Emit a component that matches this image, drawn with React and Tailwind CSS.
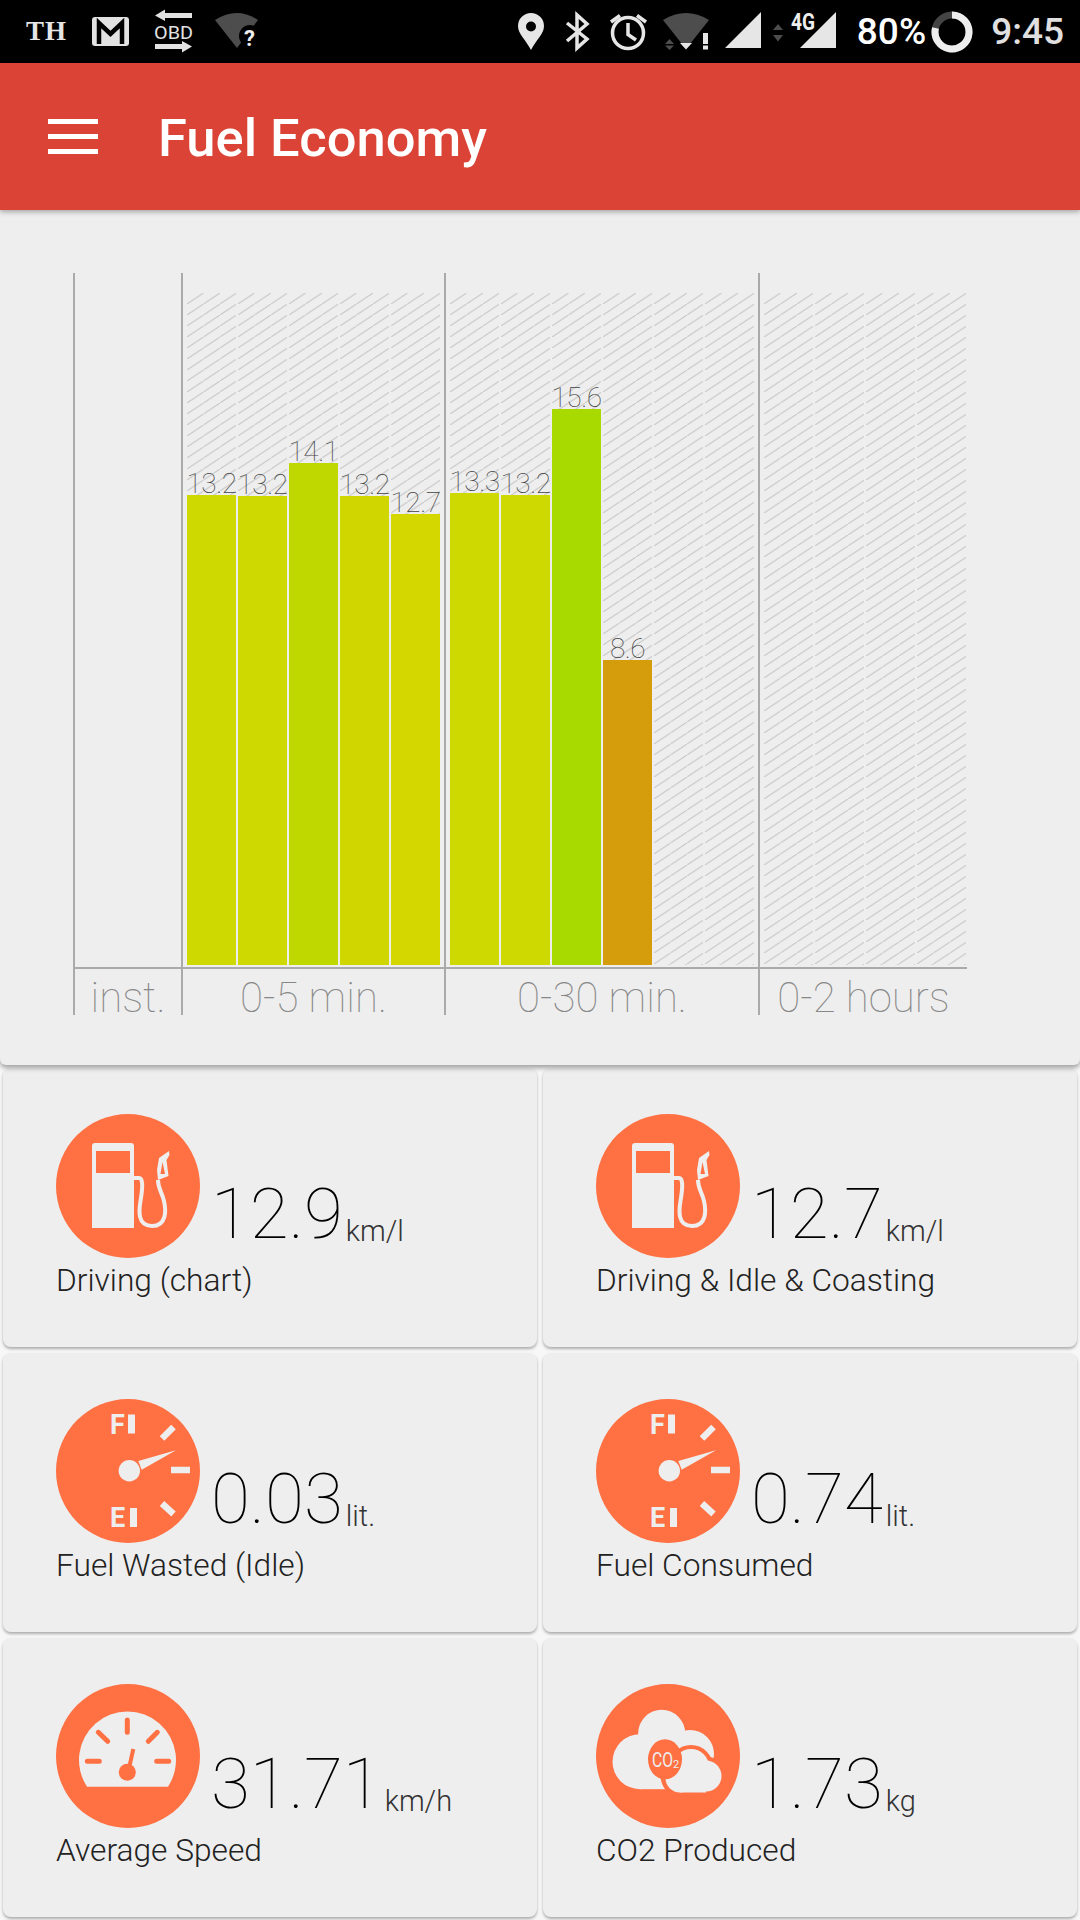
import React from 'react';

const ORANGE = '#ff7043';
const LIGHT = '#eeeeee';

/* status bar icons */
function LeftIcons() {
  return (
    <svg width="180" height="63" viewBox="85 0 180 63" className="shrink-0">
      <rect x="92" y="17" width="37" height="29" rx="3" fill="#e2e2e2" />
      <path d="M99 44V23L110.500 34L122 23V44" fill="none" stroke="#000" strokeWidth="4.500" />
      <path d="M155 15.500L165 9.500V13H192V18H165V21Z" fill="#e2e2e2" />
      <text x="154" y="38.500" fontSize="19" fill="#e2e2e2" fontFamily="Roboto" textLength="39" lengthAdjust="spacingAndGlyphs">OBD</text>
      <path d="M192 46.500L182 52.500V49H155V44H182V41Z" fill="#e2e2e2" />
      <path d="M215 20Q237 6 258 20L237 48Z" fill="#4d4d4d" />
      <circle cx="250" cy="36" r="11" fill="#000" />
      <text x="244" y="46" fontSize="22" fontWeight="700" fill="#eee" fontFamily="Roboto">?</text>
    </svg>
  );
}

function RightIcons() {
  return (
    <svg width="330" height="63" viewBox="510 0 330 63" className="shrink-0">
      {/* pin */}
      <path fillRule="evenodd" d="M531 50C526 40 518 34 518 26A13 13 0 0 1 544 26C544 34 536 40 531 50ZM531 21.500A5 5 0 1 0 531 31.500A5 5 0 1 0 531 21.500Z" fill="#e6e6e6" />
      {/* bluetooth */}
      <path d="M567 23L587 39L577 48V15L587 24L567 41" fill="none" stroke="#e6e6e6" strokeWidth="3.500" />
      {/* alarm */}
      <circle cx="628" cy="33" r="15.500" fill="none" stroke="#e6e6e6" strokeWidth="3.500" />
      <path d="M628 23V34.500L636 40M611 22L620 15.500M637 15.500L646 22" fill="none" stroke="#e6e6e6" strokeWidth="3.500" />
      {/* wifi */}
      <path d="M663 20Q686 6 709 20L686 49Z" fill="#4d4d4d" />
      <path d="M680 43H692L686 49.500Z" fill="#e6e6e6" />
      <rect x="703" y="33" width="5" height="11" fill="#e6e6e6" />
      <rect x="703" y="45.500" width="5" height="4" fill="#e6e6e6" />
      <path d="M665 44L669.500 39L674 44ZM665 45.500H674L669.500 50Z" fill="#4d4d4d" />
      {/* signal */}
      <path d="M725 48L761 12V48Z" fill="#e6e6e6" />
      <path d="M773 30L778 24L783 30ZM773 35H783L778 41.500Z" fill="#4d4d4d" />
      <path d="M800 48L836 12V48Z" fill="#e6e6e6" />
      <text x="791" y="30" fontSize="23" fontWeight="700" fill="#eee" fontFamily="Roboto" textLength="24" lengthAdjust="spacingAndGlyphs">4G</text>
    </svg>
  );
}

function BatteryRing() {
  return (
    <svg width="42" height="42" viewBox="0 0 42 42" className="shrink-0">
      <circle cx="21" cy="21" r="17" fill="none" stroke="#444" strokeWidth="7" />
      <path d="M21 4A17 17 0 1 1 4.500 17" fill="none" stroke="#eeeeee" strokeWidth="7" />
    </svg>
  );
}

function Hamburger() {
  return (
    <svg width="50" height="36" viewBox="0 0 50 36" className="shrink-0">
      <rect y="0" width="50" height="5" fill="#fff" />
      <rect y="15" width="50" height="5" fill="#fff" />
      <rect y="30" width="50" height="5" fill="#fff" />
    </svg>
  );
}

/* card icons, all on a 144 circle */
function Circle({ children }) {
  return (
    <svg width="144" height="144" viewBox="0 0 144 144" className="shrink-0">
      <circle cx="72" cy="72" r="72" fill={ORANGE} />
      {children}
    </svg>
  );
}

function PumpIcon() {
  return (
    <Circle>
      <path d="M36 32a3 3 0 0 1 3-3h36a3 3 0 0 1 3 3v82H36Z" fill={LIGHT} />
      <rect x="40" y="37" width="34" height="22" fill={ORANGE} />
      <path d="M78 64H83C88 64 86 78 84.500 87C83 96 81 112 96 112C111 112 110 96 108 87C106 78 102 75 102 66" fill="none" stroke={LIGHT} strokeWidth="4" />
      <path d="M101 56L103 44L113 37L113.500 41L110.500 46L112.500 62L102 66Z" fill={LIGHT} />
      <path d="M104.500 60L106.500 48L109 60Z" fill={ORANGE} />
    </Circle>
  );
}

function FuelIcon() {
  return (
    <Circle>
      <text x="54" y="34.500" fontSize="27" fontWeight="700" fontFamily="Roboto" fill={LIGHT}>F</text>
      <rect x="72" y="15.500" width="7" height="19" fill={LIGHT} />
      <text x="54" y="128" fontSize="27" fontWeight="700" fontFamily="Roboto" fill={LIGHT}>E</text>
      <rect x="74" y="109" width="7" height="19" fill={LIGHT} />
      <path d="M106 39.500L117.500 28M115 71H134M106 104.500L117.500 115" stroke={LIGHT} strokeWidth="6.500" fill="none" />
      <path d="M120 51.300L82.300 62L85.700 70.700Z" fill={LIGHT} />
      <circle cx="73.300" cy="71.700" r="10.700" fill={LIGHT} />
    </Circle>
  );
}

function SpeedIcon() {
  return (
    <Circle>
      <path d="M31 102.700A48.500 48.500 0 1 1 112 102.700Z" fill={LIGHT} />
      <path d="M71.300 36V48.300M42.300 48.300L51.700 57.300M101.300 48.300L92.300 57.300M31.300 77.300H43.300M100.700 77.300H112.700" stroke={ORANGE} strokeWidth="5" strokeLinecap="round" fill="none" />
      <path d="M77.300 65L73.300 83" stroke={ORANGE} strokeWidth="4" fill="none" />
      <circle cx="71.300" cy="88.300" r="8.500" fill={ORANGE} />
    </Circle>
  );
}

function CloudIcon() {
  return (
    <Circle>
      <g fill={LIGHT}>
        <circle cx="44" cy="77.700" r="27.500" />
        <circle cx="65.700" cy="49.300" r="23.500" />
        <circle cx="94" cy="70" r="24" />
        <rect x="44" y="60" width="40" height="45.200" />
      </g>
      <g fill={ORANGE} stroke={ORANGE} strokeWidth="8">
        <circle cx="95" cy="83" r="18" />
        <circle cx="110" cy="92" r="15.500" />
        <circle cx="84" cy="94" r="14.500" />
      </g>
      <g fill={LIGHT}>
        <circle cx="95" cy="83" r="18" />
        <circle cx="110" cy="92" r="15.500" />
        <circle cx="84" cy="94" r="14.500" />
        <rect x="84" y="85" width="26" height="23.500" />
      </g>
      <ellipse cx="69" cy="75.300" rx="17" ry="20" fill={ORANGE} />
      <path d="M66 92C67 100 70 105 75 109" fill="none" stroke={ORANGE} strokeWidth="3.500" />
      <text x="56" y="83" fontSize="21" fill={LIGHT} fontFamily="Roboto" textLength="21" lengthAdjust="spacingAndGlyphs">CO</text>
      <text x="77" y="84" fontSize="11" fill={LIGHT} fontFamily="Roboto">2</text>
    </Circle>
  );
}

/* chart */
function Hatch({ id }) {
  return (
    <svg className="absolute inset-0 w-full h-full">
      <defs>
        <pattern id={id} width="16.500" height="11" patternUnits="userSpaceOnUse">
          <path d="M-1.650 12.100L18.150 -1.100" stroke="#cccccc" strokeWidth="1.300" />
        </pattern>
      </defs>
      <rect width="100%" height="100%" fill={`url(#${id})`} />
    </svg>
  );
}

function Slot({ id, bar }) {
  return (
    <div className="relative w-[49px] h-full flex flex-col justify-end items-center">
      <Hatch id={id} />
      {bar && (
        <>
          <span className="relative text-[28px] font-thin leading-[22px] text-[#444] whitespace-nowrap tracking-[-0.5px]">{bar.value}</span>
          <div className="relative w-full" style={{ height: bar.height, backgroundColor: bar.color }} />
        </>
      )}
    </div>
  );
}

const segments = [
  { key: 'inst', width: 108, label: 'inst.', slots: [] },
  {
    key: 'five',
    width: 263,
    label: '0-5 min.',
    slots: [
      { value: '13.2', height: 470, color: '#cdd900' },
      { value: '13.2', height: 469, color: '#cdd900' },
      { value: '14.1', height: 502, color: '#bfd900' },
      { value: '13.2', height: 469, color: '#d0d700' },
      { value: '12.7', height: 451, color: '#d4d800' },
    ],
  },
  {
    key: 'thirty',
    width: 314,
    label: '0-30 min.',
    slots: [
      { value: '13.3', height: 472, color: '#cdd900' },
      { value: '13.2', height: 470, color: '#cdd900' },
      { value: '15.6', height: 556, color: '#a8da00' },
      { value: '8.6', height: 305, color: '#d59c0b' },
      null,
      null,
    ],
  },
  { key: 'hours', width: 209, label: '0-2 hours', slots: [null, null, null, null] },
];

function Chart() {
  return (
    <div className="relative h-[855px] bg-[#eeeeee] rounded-b-[6px] shadow-[0_3px_5px_rgba(0,0,0,0.35)] pt-[63px] pl-[73px] flex items-start">
      {segments.map((seg) => (
        <div key={seg.key} className="flex flex-col border-l-2 border-[#aaaaaa] shrink-0" style={{ width: seg.width }}>
          <div className="h-[696px] border-b-2 border-[#aaaaaa] pt-[20px] pb-[2px] pl-[4px] flex gap-[2px]">
            {seg.slots.map((bar, i) => (
              <Slot key={i} id={`hatch-${seg.key}-${i}`} bar={bar} />
            ))}
          </div>
          <div className="h-[46px] pt-[12px] flex justify-center items-center text-[42px] font-thin leading-none text-[#888] whitespace-nowrap">
            {seg.label}
          </div>
        </div>
      ))}
    </div>
  );
}

const cards = [
  { icon: <PumpIcon />, value: '12.9', unit: 'km/l', label: 'Driving (chart)' },
  { icon: <PumpIcon />, value: '12.7', unit: 'km/l', label: 'Driving & Idle & Coasting' },
  { icon: <FuelIcon />, value: '0.03', unit: 'lit.', label: 'Fuel Wasted (Idle)' },
  { icon: <FuelIcon />, value: '0.74', unit: 'lit.', label: 'Fuel Consumed' },
  { icon: <SpeedIcon />, value: '31.71', unit: 'km/h', label: 'Average Speed' },
  { icon: <CloudIcon />, value: '1.73', unit: 'kg', label: 'CO2 Produced' },
];

function MetricCard({ icon, value, unit, label }) {
  return (
    <div className="h-[279px] bg-[#eeeeee] rounded-[8px] shadow-[0_2px_3px_rgba(0,0,0,0.3)] pt-[46px] pl-[53px]">
      <div className="flex items-end">
        {icon}
        <div className="flex items-baseline ml-[11px] mb-[9px]">
          <span className="text-[71px] font-thin leading-none text-black">{value}</span>
          <span className="text-[29px] font-light leading-none text-[#333] ml-[3px] translate-y-[3px]">{unit}</span>
        </div>
      </div>
      <div className="mt-[3px] text-[31.700px] font-light leading-[40px] text-[#222]">{label}</div>
    </div>
  );
}

export default function App() {
  return (
    <div className="w-[1080px] h-[1920px] overflow-hidden bg-[#f7f7f7] font-['Roboto',sans-serif]">
      {/* Status bar */}
      <div className="h-[63px] bg-black flex items-center justify-between">
        <div className="flex items-center pl-[26px]">
          <span className="w-[59px] font-['Liberation_Serif',serif] font-bold text-[27px] tracking-[1px] text-[#e6e6e6]">TH</span>
          <LeftIcons />
        </div>
        <div className="flex items-center pr-[16px]">
          <RightIcons />
          <span className="ml-[17px] text-[37px] font-medium text-white leading-none">80%</span>
          <span className="ml-[5px]"><BatteryRing /></span>
          <span className="ml-[18px] text-[37px] font-medium text-[#e0e0e0] leading-none">9:45</span>
        </div>
      </div>

      {/* App bar */}
      <div className="relative z-10 h-[147px] bg-[#da4336] shadow-[0_2px_5px_rgba(0,0,0,0.3)] flex items-center pl-[48px]">
        <Hamburger />
        <span className="ml-[60px] pt-[4px] text-[52.500px] font-medium text-white leading-none">Fuel Economy</span>
      </div>

      <Chart />

      <div className="grid grid-cols-2 gap-x-[6px] gap-y-[6px] px-[3px] pt-[3px]">
        {cards.map((c) => (
          <MetricCard key={c.label} {...c} />
        ))}
      </div>
    </div>
  );
}
